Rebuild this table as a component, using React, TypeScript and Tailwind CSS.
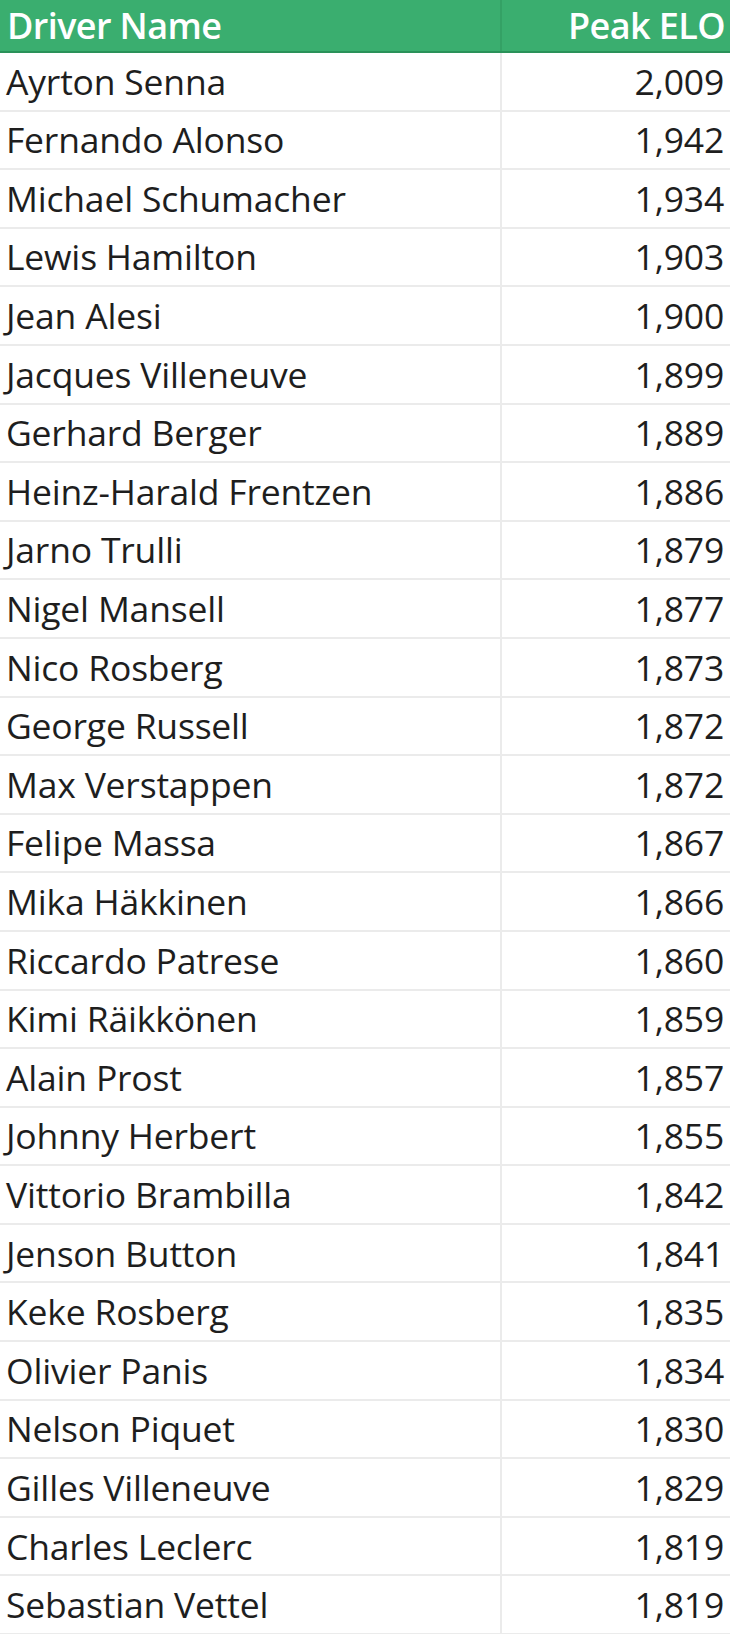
import React from "react";

const rows: [string, string][] = [
  ["Ayrton Senna", "2,009"],
  ["Fernando Alonso", "1,942"],
  ["Michael Schumacher", "1,934"],
  ["Lewis Hamilton", "1,903"],
  ["Jean Alesi", "1,900"],
  ["Jacques Villeneuve", "1,899"],
  ["Gerhard Berger", "1,889"],
  ["Heinz-Harald Frentzen", "1,886"],
  ["Jarno Trulli", "1,879"],
  ["Nigel Mansell", "1,877"],
  ["Nico Rosberg", "1,873"],
  ["George Russell", "1,872"],
  ["Max Verstappen", "1,872"],
  ["Felipe Massa", "1,867"],
  ["Mika Häkkinen", "1,866"],
  ["Riccardo Patrese", "1,860"],
  ["Kimi Räikkönen", "1,859"],
  ["Alain Prost", "1,857"],
  ["Johnny Herbert", "1,855"],
  ["Vittorio Brambilla", "1,842"],
  ["Jenson Button", "1,841"],
  ["Keke Rosberg", "1,835"],
  ["Olivier Panis", "1,834"],
  ["Nelson Piquet", "1,830"],
  ["Gilles Villeneuve", "1,829"],
  ["Charles Leclerc", "1,819"],
  ["Sebastian Vettel", "1,819"],
];

export default function App() {
  return (
    <div
      className="w-[730px] h-[1634px] overflow-hidden bg-white text-[#1e1e1e]"
      style={{ fontFamily: '"Open Sans", "Noto Sans", sans-serif' }}
    >
      <div className="flex h-[53px] bg-[#3aae6f] border-b-2 border-[#2a9259] text-white font-semibold text-[36px] tracking-[-0.6px]">
        <div className="w-[502px] border-r-2 border-[#34a165] flex items-center pl-[7px]">
          Driver Name
        </div>
        <div className="flex-1 flex items-center justify-end pr-[5px]">Peak ELO</div>
      </div>
      {rows.map(([name, elo]) => (
        <div
          key={name}
          className="flex h-[58.6px] border-b-2 border-[#ebebeb] text-[35.5px] font-[370] tracking-[-0.2px]"
        >
          <div className="w-[502px] border-r-2 border-[#ebebeb] flex items-center pl-[6px]">
            {name}
          </div>
          <div className="flex-1 flex items-center justify-end pr-[6px]">{elo}</div>
        </div>
      ))}
    </div>
  );
}
